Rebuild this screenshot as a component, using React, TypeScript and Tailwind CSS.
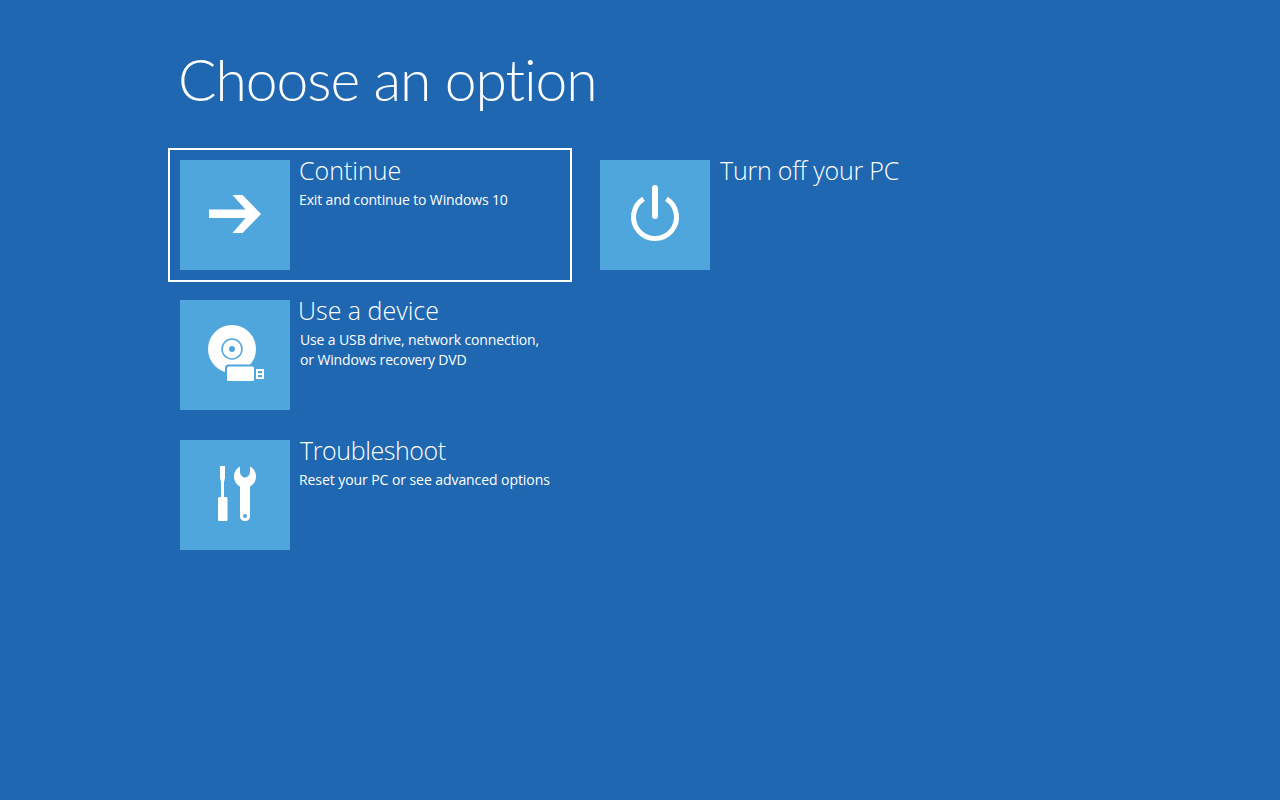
function ArrowIcon() {
  return (
    <svg width="110" height="110" viewBox="0 0 110 110" fill="#fff">
      <path d="M29 49.500H65.500L52.500 35H62.500L81 54 62.500 73H52.500L65.500 58H29Z" />
    </svg>
  )
}

function PowerIcon() {
  return (
    <svg width="110" height="110" viewBox="0 0 110 110" fill="none" stroke="#fff" strokeWidth="5">
      <path d="M43.500 38.800A21.500 21.500 0 1 0 66.500 38.800" />
      <path d="M55 28V56" strokeWidth="6" strokeLinecap="round" />
    </svg>
  )
}

function DeviceIcon() {
  return (
    <svg width="110" height="110" viewBox="0 0 110 110">
      <circle cx="52" cy="49" r="24" fill="#fff" />
      <circle cx="52" cy="49" r="10" fill="none" stroke="#4fa6dd" strokeWidth="1.500" />
      <circle cx="52" cy="49" r="3" fill="#4fa6dd" />
      <rect x="46" y="65.500" width="29" height="16.500" rx="2.500" fill="#fff" stroke="#4fa6dd" strokeWidth="2" />
      <path d="M76 69H84V79H76Z" fill="#fff" />
      <path d="M78 71H82V73.300H78ZM78 75H82V77.300H78Z" fill="#4fa6dd" />
    </svg>
  )
}

function ToolsIcon() {
  return (
    <svg width="110" height="110" viewBox="0 0 110 110" fill="#fff">
      <path d="M40 26H45V38L44 42V57H46C47 57 47.500 57.500 47.500 58.500V79.500C47.500 80.500 47 81 46 81H39.500C38.500 81 38 80.500 38 79.500V58.500C38 57.500 38.500 57 39.500 57H41V42L40 38Z" />
      <path d="M60 26.500V31.500C60 35 62.500 37.500 65 37.500S70 35 70 31.500V26.500C73.500 28.500 76 32 76 36.500 76 41 73.500 44.500 70 46.500V76C70 79.500 68 81 65 81S60 79.500 60 76V46.500C56.500 44.500 54 41 54 36.500 54 32 56.500 28.500 60 26.500Z" />
      <circle cx="65" cy="76" r="2" fill="#4fa6dd" />
    </svg>
  )
}

function Option({
  icon,
  title,
  titleClass,
  descClass,
  focused,
  children,
}: {
  icon: React.ReactNode
  title: string
  titleClass?: string
  descClass?: string
  focused?: boolean
  children?: React.ReactNode
}) {
  return (
    <div className={`flex h-[134px] w-[404px] border-2 p-[10px] ${focused ? "border-white" : "border-transparent"}`}>
      <div className="size-[110px] shrink-0 bg-[#4fa6dd]">{icon}</div>
      <div className="flex flex-col">
        <h2 className={`-mt-px text-[25px] leading-[22px] font-light ${titleClass}`}>{title}</h2>
        {children && (
          <p className={`mt-[9px] text-[14px] leading-[20px] whitespace-nowrap ${descClass}`}>{children}</p>
        )}
      </div>
    </div>
  )
}

export default function App() {
  return (
    <main className="h-[800px] w-[1280px] overflow-hidden bg-[#1f67b1] pl-[168px] font-['Open_Sans',sans-serif] text-white">
      <h1 className="pt-[43px] pl-[10px] font-['Lato',sans-serif] text-[57px] leading-[73px] font-light tracking-[-1.06px]">
        Choose an option
      </h1>
      <div className="mt-[32px] flex gap-4">
        <div className="flex flex-col gap-[6px]">
          <Option
            icon={<ArrowIcon />}
            title="Continue"
            titleClass="ml-[9px]"
            descClass="ml-[9px] tracking-[-0.14px]"
            focused
          >
            Exit and continue to Windows 10
          </Option>
          <Option
            icon={<DeviceIcon />}
            title="Use a device"
            titleClass="ml-2"
            descClass="ml-[10px] tracking-[-0.13px]"
          >
            Use a USB drive, network connection,
            <br />
            or Windows recovery DVD
          </Option>
          <Option
            icon={<ToolsIcon />}
            title="Troubleshoot"
            titleClass="ml-[10px] tracking-[-0.4px]"
            descClass="ml-[9px] tracking-[-0.07px]"
          >
            Reset your PC or see advanced options
          </Option>
        </div>
        <div>
          <Option icon={<PowerIcon />} title="Turn off your PC" titleClass="ml-[10px] tracking-[-0.2px]" />
        </div>
      </div>
    </main>
  )
}
